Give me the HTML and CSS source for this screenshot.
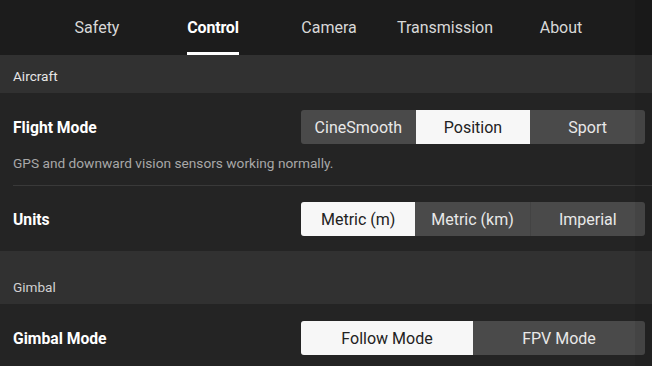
FILE: index.html
```html
<!DOCTYPE html>
<html lang="en">
<head>
<meta charset="UTF-8" />
<title>Control</title>
<link rel="stylesheet" href="styles.css">
</head>
<body>

<div class="tabs">
  <div class="tab">Safety</div>
  <div class="tab active"><span>Control</span></div>
  <div class="tab">Camera</div>
  <div class="tab">Transmission</div>
  <div class="tab">About</div>
</div>

<div class="section-title first">Aircraft</div>

<div class="row flight">
  <div class="row-main">
    <div class="label">Flight Mode</div>
    <div class="seg">
      <div class="seg-item">CineSmooth</div>
      <div class="seg-item on">Position</div>
      <div class="seg-item">Sport</div>
    </div>
  </div>
  <div class="desc">GPS and downward vision sensors working normally.</div>
</div>
<div class="divider"></div>

<div class="row units">
  <div class="row-main">
    <div class="label">Units</div>
    <div class="seg">
      <div class="seg-item on">Metric (m)</div>
      <div class="seg-item">Metric (km)</div>
      <div class="seg-item">Imperial</div>
    </div>
  </div>
</div>

<div class="section-title gimbal">Gimbal</div>

<div class="row">
  <div class="row-main">
    <div class="label">Gimbal Mode</div>
    <div class="seg">
      <div class="seg-item on">Follow Mode</div>
      <div class="seg-item">FPV Mode</div>
    </div>
  </div>
</div>

<div class="edge"></div>

</body>
</html>
```

FILE: styles.css
```css
html, body {
  margin: 0;
  padding: 0;
}
body {
  font-family: Roboto, "Noto Sans", sans-serif;
  background-color: #242424;
  color: #fff;
  width: 652px;
  height: 366px;
  overflow: hidden;
}
.tabs {
  display: flex;
  justify-content: center;
  height: 55px;
  background-color: #1c1c1c;
  padding-left: 6px;
  box-sizing: border-box;
}
.tab {
  width: 116px;
  display: flex;
  justify-content: center;
  align-items: center;
  font-size: 16px;
  color: #d8d8d8;
}
.tab.active span {
  color: #fff;
  font-weight: bold;
  letter-spacing: -0.2px;
  height: 55px;
  line-height: 56px;
  box-sizing: border-box;
  border-bottom: 3px solid #fff;
}
.section-title {
  background-color: #313131;
  font-size: 13.6px;
  line-height: 18px;
  color: #e6e6e6;
  padding: 12px 13px 8px;
}
.section-title.gimbal {
  padding-top: 27px;
  color: #d0d0d0;
}
.row {
  padding: 17px 7px 17px 13px;
}
.row.flight {
  padding-bottom: 13px;
}
.row.units {
  padding-top: 16px;
  padding-bottom: 15px;
}
.row-main {
  display: flex;
  justify-content: space-between;
  align-items: center;
  height: 34px;
}
.label {
  font-size: 15.7px;
  font-weight: bold;
}
.desc {
  margin-top: 10px;
  font-size: 13.7px;
  line-height: 18px;
  color: #a8a8a8;
}
.divider {
  height: 1px;
  margin-left: 13px;
  background-color: #393939;
}
.seg {
  display: flex;
  width: 344px;
  height: 34px;
  border-radius: 3px;
  overflow: hidden;
  background-color: #4a4a4a;
}
.seg-item {
  flex: 1;
  display: flex;
  justify-content: center;
  align-items: center;
  font-size: 16px;
  color: #e8e8e8;
  border-left: 1px solid #434343;
}
.seg-item:first-child {
  border-left: none;
}
.seg-item.on {
  background-color: #f7f7f7;
  color: #222;
  border-left: none;
}
.seg-item.on + .seg-item {
  border-left: none;
}
.edge {
  position: absolute;
  top: 0;
  right: 0;
  width: 17px;
  height: 366px;
  background-color: rgba(0,0,0,0.08);
}
```
